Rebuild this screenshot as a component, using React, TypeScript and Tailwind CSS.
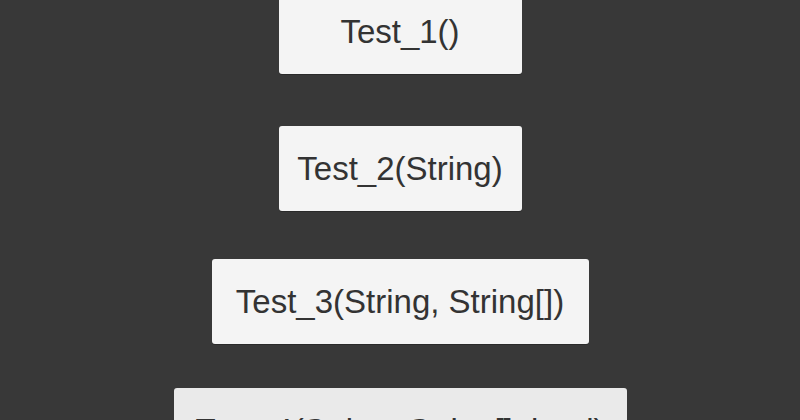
const buttons = [
  { label: "Test_1()", className: "mt-[-11px] w-[243px] bg-[#f4f4f4]" },
  { label: "Test_2(String)", className: "mt-[52px] w-[243px] bg-[#f4f4f4]" },
  { label: "Test_3(String, String[])", className: "mt-[48px] w-[377px] bg-[#f4f4f4]" },
  { label: "Test_4(String, String[], bool)", className: "mt-[44px] w-[453px] bg-[#eaeaea]" },
];

export default function App() {
  return (
    <div className="h-[420px] w-[800px] overflow-hidden bg-[#383838] font-['Liberation_Sans',Arial,sans-serif]">
      <div className="flex flex-col items-center">
        {buttons.map((b) => (
          <button
            key={b.label}
            className={`${b.className} flex h-[85px] shrink-0 items-center justify-center rounded-[3px] pb-[1px] text-[33px] leading-none text-[#333333] shadow-[0_1px_0_rgba(0,0,0,0.25)]`}
          >
            {b.label}
          </button>
        ))}
      </div>
    </div>
  );
}
